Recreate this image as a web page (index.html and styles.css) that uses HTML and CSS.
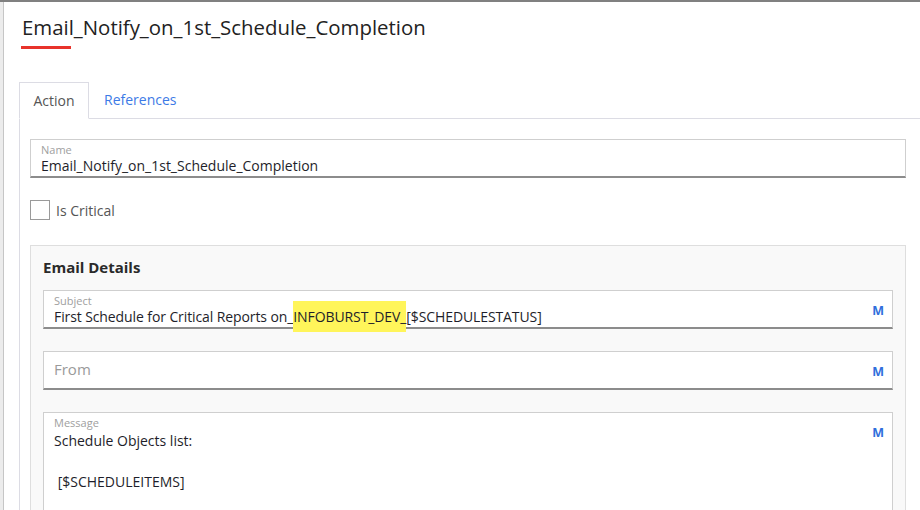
FILE: index.html
```html
<!DOCTYPE html>
<html>
<head>
<meta charset="utf-8">
<link rel="stylesheet" href="styles.css">
</head>
<body>
<div class="frame">
  <div class="page">
    <header class="header">
      <h1 class="title">Email_Notify_on_1st_Schedule_Completion</h1>
      <div class="title-bar"></div>
    </header>
    <nav class="tabs">
      <div class="tab tab-active">Action</div>
      <div class="tab">References</div>
      <div class="tab-fill"></div>
    </nav>
    <section class="tab-panel">
      <div class="field">
        <div class="field-body">
          <div class="field-label">Name</div>
          <div class="field-value">Email_Notify_on_1st_Schedule_Completion</div>
        </div>
      </div>
      <label class="check-row">
        <span class="checkbox"></span>
        <span class="check-text">Is Critical</span>
      </label>
      <div class="panel">
        <div class="panel-title">Email Details</div>
        <div class="field">
          <div class="field-body">
            <div class="field-label">Subject</div>
            <div class="field-value subject-text">First Schedule for Critical Reports on_<span class="hl">INFOBURST_DEV_</span>[$SCHEDULESTATUS]</div>
          </div>
          <span class="macro">M</span>
        </div>
        <div class="field field-empty">
          <div class="field-body">
            <div class="field-placeholder">From</div>
          </div>
          <span class="macro">M</span>
        </div>
        <div class="field field-message">
          <div class="field-body">
            <div class="field-label">Message</div>
            <div class="field-value message-text">Schedule Objects list:

 [$SCHEDULEITEMS]
</div>
          </div>
          <span class="macro">M</span>
        </div>
      </div>
    </section>
  </div>
</div>
</body>
</html>
```
FILE: styles.css
```css
* { box-sizing: border-box; }
html, body { margin: 0; padding: 0; }
body {
  width: 920px;
  height: 510px;
  overflow: hidden;
  background: #ffffff;
  font-family: "Open Sans", "Liberation Sans", sans-serif;
  color: #222;
}
.frame {
  border-top: 2px solid #808080;
  padding-left: 3px;
  background: #ececec;
  height: 100%;
}
.page {
  background: #fff;
  border-left: 1px solid #c6c6c6;
  height: 100%;
  padding-left: 15px;
}
.header {
  padding-top: 12px;
  padding-left: 2px;
}
.title {
  margin: 0 0 0 1px;
  font-size: 20.4px;
  font-weight: 400;
  line-height: 26px;
  color: #222;
}
.title-bar {
  width: 50px;
  height: 3px;
  background: #e8332b;
  margin-top: 6px;
}
.tabs {
  display: flex;
  margin-top: 33px;
  height: 37px;
}
.tab {
  padding: 0 15px;
  font-size: 14px;
  line-height: 35px;
  color: #3d7ae6;
  border-bottom: 1px solid #dcdce4;
}
.tab-active {
  color: #555;
  border: 1px solid #dcdce4;
  border-bottom: 1px solid #fff;
  width: 70px;
  text-align: center;
  padding: 0;
}
.tab-fill {
  flex: 1;
  border-bottom: 1px solid #dcdce4;
}
.tab-panel {
  border-left: 1px solid #dcdce4;
  padding: 20px 14px 0 10px;
  height: 400px;
}
.field {
  display: flex;
  align-items: flex-start;
  background: #fff;
  border: 1px solid #cfcfcf;
  border-bottom: 2px solid #8c8c8c;
  padding: 3px 8px 1px 10px;
  min-height: 39px;
}
.field-body { flex: 1; }
.field-label {
  font-size: 11px;
  line-height: 13px;
  color: #a0a0a0;
}
.field-value {
  font-size: 14px;
  line-height: 19px;
  color: #1e1e2a;
}
.subject-text { letter-spacing: -0.1px; }
.field-placeholder {
  font-size: 15px;
  line-height: 26px;
  padding-top: 1px;
  color: #9a9a9a;
}
.hl {
  background: #fff55a;
  padding: 6px 0 6px;
}
.macro {
  font-size: 12.5px;
  font-weight: 700;
  color: #2f6fdc;
  padding-top: 10px;
  line-height: 14px;
}
.check-row {
  display: flex;
  align-items: center;
  margin-top: 22px;
  height: 20px;
}
.checkbox {
  width: 20px;
  height: 20px;
  border: 1px solid #9a9a9a;
  background: #fff;
}
.check-text {
  margin-left: 6px;
  font-size: 14px;
  color: #555;
}
.panel {
  margin-top: 25px;
  background: #f9f9f9;
  border: 1px solid #dedede;
  padding: 11px 12px 0 12px;
  height: 300px;
}
.panel-title {
  font-size: 15px;
  font-weight: 700;
  line-height: 20px;
  color: #2a2a2a;
  margin-bottom: 13px;
}
.panel .field + .field { margin-top: 22px; }
.field-message { min-height: 120px; }
.message-text {
  white-space: pre-wrap;
  line-height: 20.5px;
  padding-top: 2px;
}
```
